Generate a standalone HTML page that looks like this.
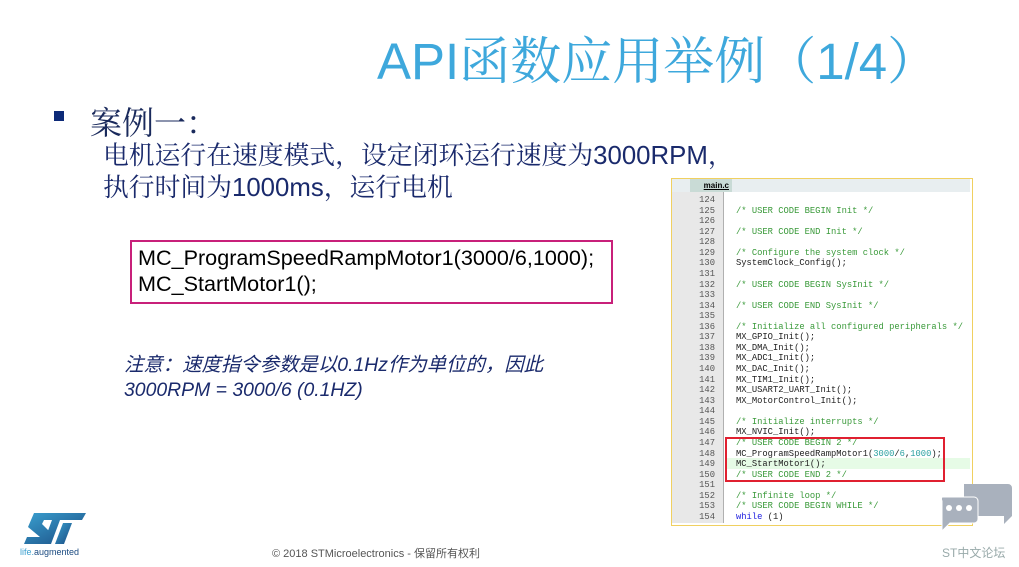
<!DOCTYPE html>
<html><head><meta charset="utf-8"><style>
body{margin:0;width:1019px;height:567px;background:#fff;position:relative;overflow:hidden;font-family:"Liberation Sans","Noto Sans CJK SC",sans-serif}
.a{position:absolute;white-space:nowrap}
.code{font-family:"Liberation Mono",monospace;font-size:8.8px;line-height:10.57px}
.c{color:#3a9a3a}.k{color:#2020e0}.n{color:#2aa0a0}
</style></head><body>
<div class="a" style="left:377px;top:20px;font-size:51px;color:#3ea8dc;font-family:'Liberation Sans','Noto Serif CJK SC',serif">API函数应用举例（1/4）</div>
<div class="a" style="left:54px;top:111px;width:10px;height:10px;background:#0d2a78"></div>
<div class="a" style="left:90px;top:98px;font-size:32px;color:#1a2a5c;font-family:'Liberation Sans','Noto Serif CJK SC',serif">案例一：</div>
<div class="a" style="left:103px;top:140px;font-size:25.8px;line-height:32px;color:#1a2a6c;font-family:'Liberation Sans','Noto Serif CJK SC',serif">电机运行在速度模式，设定闭环运行速度为3000RPM，<br>执行时间为1000ms，运行电机</div>
<div class="a" style="left:130px;top:240px;width:479px;height:60px;border:2px solid #c8207a"></div>
<div class="a" style="left:138px;top:245px;font-size:21.6px;line-height:26px;color:#000">MC_ProgramSpeedRampMotor1(3000/6,1000);<br>MC_StartMotor1();</div>
<div class="a" style="left:124px;top:353px;font-size:19.4px;line-height:25px;font-style:italic;color:#1a2a6c">注意：速度指令参数是以0.1Hz作为单位的，因此<br>3000RPM = 3000/6 (0.1HZ)</div>

<div class="a" style="left:671px;top:178px;width:300px;height:346px;border:1px solid #f0d060;background:#fff"></div>
<div class="a" style="left:672px;top:179px;width:298px;height:13px;background:#e8eef0"></div>
<div class="a" style="left:690px;top:179px;width:42px;height:13px;background:#c9dbd6;font-size:8px;font-weight:bold;line-height:13px;text-align:right;padding-right:3px;box-sizing:border-box;text-decoration:underline">main.c</div>
<div class="a" style="left:672px;top:192px;width:51px;height:331px;background:#e8e8e8;border-right:1px solid #b0b0b0"></div>
<div class="a" style="left:725px;top:458px;width:245px;height:11px;background:#e6fbe6"></div>
<div class="a code" style="left:686px;top:195px;width:29px;text-align:right;color:#555">124<br>125<br>126<br>127<br>128<br>129<br>130<br>131<br>132<br>133<br>134<br>135<br>136<br>137<br>138<br>139<br>140<br>141<br>142<br>143<br>144<br>145<br>146<br>147<br>148<br>149<br>150<br>151<br>152<br>153<br>154</div>
<div class="a code" style="left:736px;top:195px;color:#222"><br><span class="c">/* USER CODE BEGIN Init */</span><br><br><span class="c">/* USER CODE END Init */</span><br><br><span class="c">/* Configure the system clock */</span><br>SystemClock_Config();<br><br><span class="c">/* USER CODE BEGIN SysInit */</span><br><br><span class="c">/* USER CODE END SysInit */</span><br><br><span class="c">/* Initialize all configured peripherals */</span><br>MX_GPIO_Init();<br>MX_DMA_Init();<br>MX_ADC1_Init();<br>MX_DAC_Init();<br>MX_TIM1_Init();<br>MX_USART2_UART_Init();<br>MX_MotorControl_Init();<br><br><span class="c">/* Initialize interrupts */</span><br>MX_NVIC_Init();<br><span class="c">/* USER CODE BEGIN 2 */</span><br>MC_ProgramSpeedRampMotor1(<span class="n">3000</span>/<span class="n">6</span>,<span class="n">1000</span>);<br>MC_StartMotor1();<br><span class="c">/* USER CODE END 2 */</span><br><br><span class="c">/* Infinite loop */</span><br><span class="c">/* USER CODE BEGIN WHILE */</span><br><span class="k">while</span> (1)</div>
<div class="a" style="left:725px;top:437px;width:216px;height:41px;border:2px solid #e02030"></div>

<svg class="a" style="left:938px;top:484px" width="74" height="56" viewBox="0 0 74 56">
<path d="M26 0h44a4 4 0 0 1 4 4v28l-8 8v-8H26z" fill="#a9b1bd"/>
<path d="M4 13h32a4 4 0 0 1 4 4v18a4 4 0 0 1-4 4H12l-8 8V17a4 4 0 0 1 0-4z" fill="#a9b1bd" stroke="#fff" stroke-width="1"/>
<circle cx="11" cy="24" r="3" fill="#fff"/><circle cx="21" cy="24" r="3" fill="#fff"/><circle cx="31" cy="24" r="3" fill="#fff"/>
</svg>
<div class="a" style="left:942px;top:544px;font-size:12px;color:#9aa">ST中文论坛</div>

<svg class="a" style="left:20px;top:510px" width="70" height="36" viewBox="0 0 70 36">
<defs><linearGradient id="g" x1="0" y1="0" x2="1" y2="1"><stop offset="0" stop-color="#3aa0d0"/><stop offset="1" stop-color="#1a4a80"/></linearGradient></defs>
<path d="M14 3h52l-4 7H40l-9 24h-8l9-24H24l-2 4 8 8-4 12H4l3-7h13l-12-10z" fill="url(#g)"/>
<path d="M43 13h9l-8 21h-9z" fill="url(#g)"/>
</svg>
<div class="a" style="left:20px;top:547px;font-size:9px;color:#1a4a80"><span style="color:#3aa0d0">life.</span>augmented</div>
<div class="a" style="left:272px;top:545px;font-size:11px;color:#555">© 2018 STMicroelectronics - 保留所有权利</div>
</body></html>
